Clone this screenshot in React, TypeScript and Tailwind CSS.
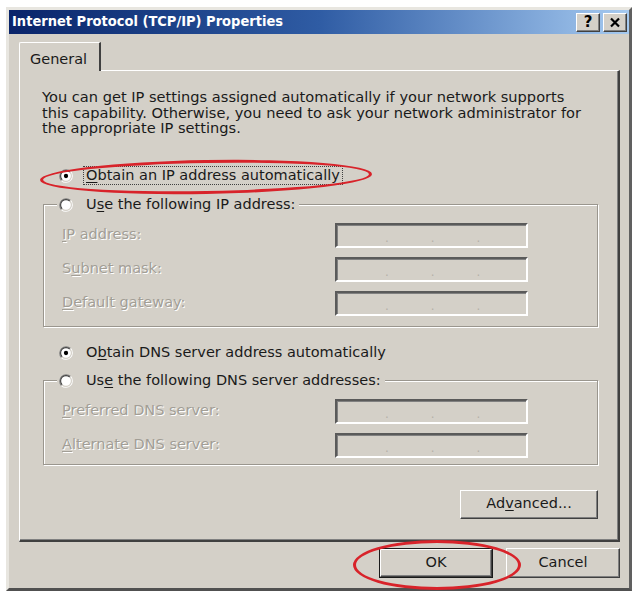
import React from 'react';

const ui = { fontFamily: '"DejaVu Sans", "Liberation Sans", sans-serif' };
const caption = { fontFamily: '"DejaVu Sans Condensed", "DejaVu Sans", sans-serif' };

function Radio({ checked }: { checked?: boolean }) {
  return (
    <svg width="14" height="14" viewBox="0 0 13 13" className="shrink-0">
      <circle cx="6.5" cy="6.5" r="5" fill="#fff" />
      <path d="M2.26 10.74A6 6 0 0 1 10.74 2.26" fill="none" stroke="#808080" />
      <path d="M10.74 2.26A6 6 0 0 1 2.26 10.74" fill="none" stroke="#fff" />
      <path d="M2.96 10.04A5 5 0 0 1 10.04 2.96" fill="none" stroke="#404040" />
      <path d="M10.04 2.96A5 5 0 0 1 2.96 10.04" fill="none" stroke="#d4d0c8" />
      {checked && <circle cx="6.5" cy="6.5" r="2" fill="#000" />}
    </svg>
  );
}

// label with one underlined accelerator letter
function Acc({ text, at }: { text: string; at: number }) {
  return (
    <>
      {text.slice(0, at)}
      <span className="underline underline-offset-2">{text[at]}</span>
      {text.slice(at + 1)}
    </>
  );
}

function RadioRow({ text, at, checked, focused }: { text: string; at: number; checked?: boolean; focused?: boolean }) {
  return (
    <div className="flex items-center h-[18px]">
      <Radio checked={checked} />
      <span
        className={
          focused
            ? 'ml-[10px] px-[2px] border border-dotted border-[#404040] leading-[17px] text-[#1a1a1a] whitespace-nowrap'
            : 'ml-[13px] text-[#1a1a1a] whitespace-nowrap leading-[17px]'
        }
      >
        <Acc text={text} at={at} />
      </span>
    </div>
  );
}

function IpBox() {
  return (
    <div className="w-[193px] h-[25px] shrink-0 border-2 border-t-[#5a5a5a] border-l-[#5a5a5a] border-b-white border-r-white shadow-[inset_1px_1px_0_#808080] grid grid-cols-4 pl-[6px] items-end pb-[1px] text-[#b4b0a8] text-[12px] leading-[14px]">
      <span className="text-right">.</span>
      <span className="text-right">.</span>
      <span className="text-right">.</span>
      <span />
    </div>
  );
}

function Field({ text, at }: { text: string; at: number }) {
  return (
    <div className="flex items-center">
      <span className="flex-1 ml-[5px] text-[#a29e96] [text-shadow:1px_1px_0_#fff] whitespace-nowrap">
        <Acc text={text} at={at} />
      </span>
      <IpBox />
    </div>
  );
}

function Button({ children, isDefault, className }: { children: React.ReactNode; isDefault?: boolean; className?: string }) {
  return (
    <div className={`${isDefault ? 'border border-[#1a1a1a]' : ''} ${className ?? ''}`}>
      <div className="w-full h-full flex items-center justify-center border border-t-white border-l-white border-r-[#404040] border-b-[#404040] shadow-[inset_-1px_-1px_0_#808080] text-[#1a1a1a]">
        {children}
      </div>
    </div>
  );
}

function TitleButton({ children }: { children: React.ReactNode }) {
  return (
    <div className="w-[24px] h-[19px] bg-[#d4d0c8] border border-t-white border-l-white border-r-[#404040] border-b-[#404040] shadow-[inset_-1px_-1px_0_#808080] flex items-center justify-center">
      {children}
    </div>
  );
}

export default function App() {
  return (
    <div className="relative w-[634px] h-[592px] bg-white pl-[6px] pt-[7px] text-[14.5px]" style={ui}>
      <div className="w-[626px] h-[584px] bg-[#d4d0c8] border-[3px] border-t-[#e8e6e0] border-l-[#e8e6e0] border-r-[#606060] border-b-[#505050] flex flex-col">
        {/* title bar */}
        <div className="h-[24px] flex items-center bg-gradient-to-r from-[#0a246a] via-[#2f5ca4] to-[#a6caf0] pl-[3px] pr-[2px]">
          <span className="text-white font-bold text-[14.5px] flex-1" style={caption}>
            Internet Protocol (TCP/IP) Properties
          </span>
          <div className="flex gap-[3px]">
            <TitleButton>
              <span className="font-bold text-[15px] leading-none text-black">?</span>
            </TitleButton>
            <TitleButton>
              <svg width="12" height="11" viewBox="0 0 12 11">
                <path d="M2 1.5l8 8M10 1.5l-8 8" stroke="#000" strokeWidth="2.2" />
              </svg>
            </TitleButton>
          </div>
        </div>

        <div className="pl-[10px] flex flex-col">
          {/* tab strip */}
          <div className="mt-[8px] flex">
            <div className="relative z-10 -mb-[1px] w-[82px] h-[29px] bg-[#d4d0c8] border-t border-l border-white border-r-2 border-r-[#404040] rounded-tl-[2px] pl-[10px] pt-[6px] text-[#1a1a1a]">
              General
            </div>
          </div>

          {/* tab page */}
          <div className="w-[601px] h-[472px] border-t border-l border-white border-r-2 border-b-2 border-r-[#404040] border-b-[#404040] shadow-[inset_-1px_-1px_0_#808080] pl-[23px] pr-[20px] pt-[18px] flex flex-col text-[#1a1a1a]">
            <p className="leading-[15.5px] -ml-px text-[14.6px] whitespace-nowrap">
              You can get IP settings assigned automatically if your network supports
              <br />
              this capability. Otherwise, you need to ask your network administrator for
              <br />
              the appropriate IP settings.
            </p>

            <div className="mt-[31px] pl-[16px]">
              <RadioRow text="Obtain an IP address automatically" at={0} checked focused />
            </div>

            <fieldset className="mt-[11px] border border-[#9a968e] shadow-[inset_1px_1px_0_#fff,1px_1px_0_#fff] pl-[13px] pr-[69px] pt-[9px] pb-[10px] flex flex-col gap-[9px]">
              <legend className="bg-[#d4d0c8] px-[2px] pr-[4px]">
                <RadioRow text="Use the following IP address:" at={1} />
              </legend>
              <Field text="IP address:" at={0} />
              <Field text="Subnet mask:" at={1} />
              <Field text="Default gateway:" at={0} />
            </fieldset>

            <div className="mt-[17px] pl-[16px]">
              <RadioRow text="Obtain DNS server address automatically" at={1} checked />
            </div>

            <fieldset className="mt-[10px] border border-[#9a968e] shadow-[inset_1px_1px_0_#fff,1px_1px_0_#fff] pl-[13px] pr-[69px] pt-[9px] pb-[6px] flex flex-col gap-[9px]">
              <legend className="bg-[#d4d0c8] px-[2px] pr-[4px]">
                <RadioRow text="Use the following DNS server addresses:" at={2} />
              </legend>
              <Field text="Preferred DNS server:" at={0} />
              <Field text="Alternate DNS server:" at={0} />
            </fieldset>

            <div className="mt-[25px] flex justify-end">
              <Button className="w-[138px] h-[29px]">
                <Acc text="Advanced..." at={2} />
              </Button>
            </div>
          </div>

          {/* dialog buttons */}
          <div className="mt-[6px] w-[601px] flex justify-end gap-[13px]">
            <Button isDefault className="w-[114px] h-[30px]">OK</Button>
            <Button className="w-[114px] h-[30px]">Cancel</Button>
          </div>
        </div>
      </div>

      {/* hand-drawn red marks */}
      <div className="absolute left-[40px] top-[160px] w-[332px] h-[34px] rounded-[50%] border-[3px] border-[#d8232a] -rotate-[1deg] pointer-events-none" />
      <div className="absolute left-[353px] top-[540px] w-[168px] h-[50px] rounded-[50%] border-[3px] border-[#d8232a] pointer-events-none" />
    </div>
  );
}
